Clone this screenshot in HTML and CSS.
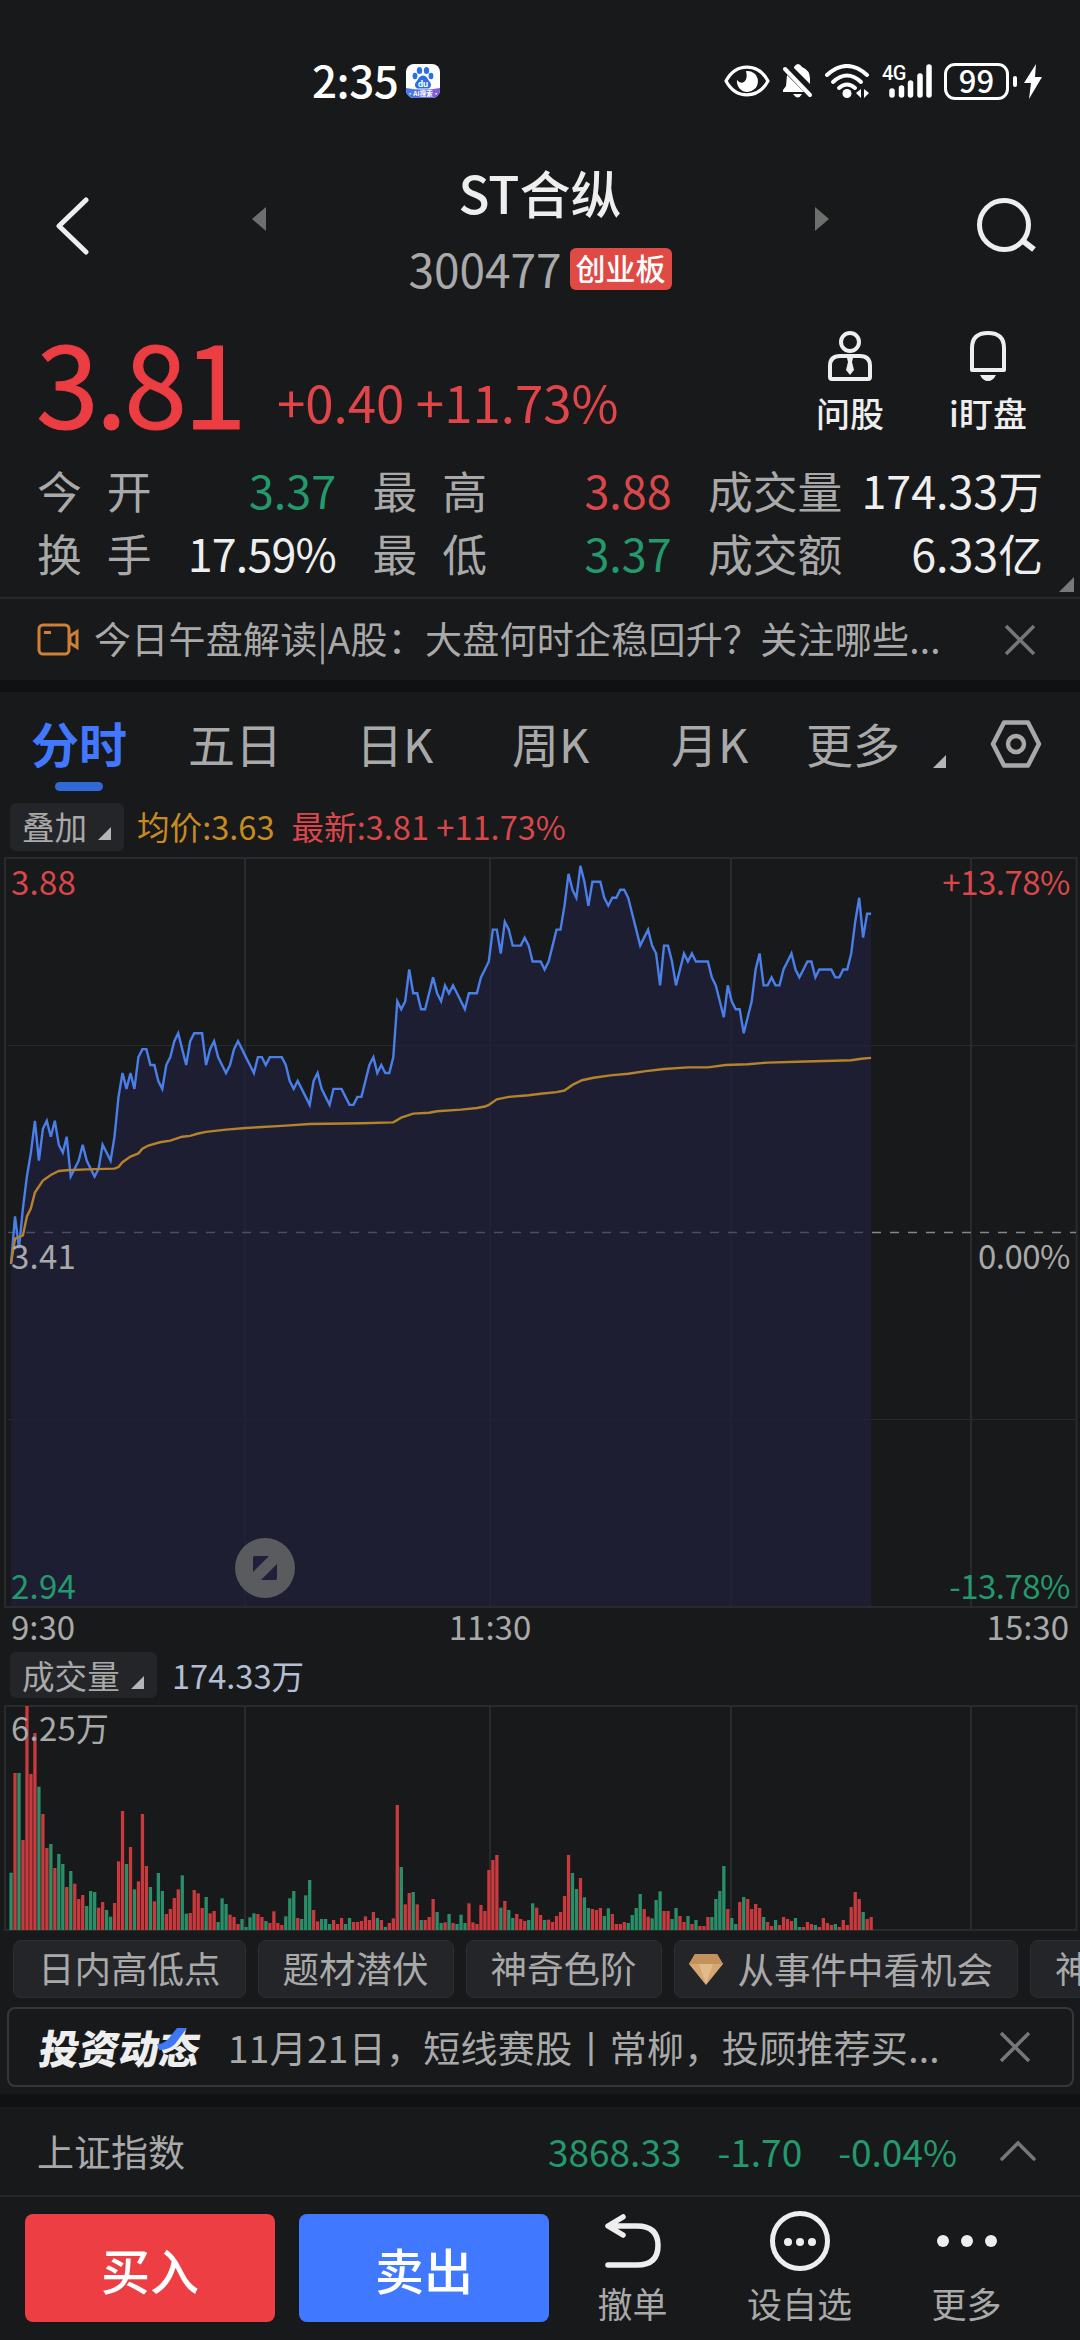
FILE: index.html
```html
<!DOCTYPE html>
<html lang="zh-CN">
<head>
  <meta charset="UTF-8" />
  <meta name="viewport" content="width=device-width, initial-scale=1.0" />
  <title>ST合纵 300477</title>
  <link rel="stylesheet" href="styles.css">
</head>
<body>
  <div class="statusbar">
    <span class="clock">2:35</span>
    <svg class="app-badge" width="34" height="34" viewBox="0 0 34 34">
      <defs>
        <linearGradient id="badge" x1="0" y1="0" x2="1" y2="0">
          <stop offset="0" stop-color="#3f7df0" /><stop offset="1" stop-color="#8458d8" />
        </linearGradient>
        <clipPath id="badgeClip"><rect width="34" height="34" rx="8" /></clipPath>
      </defs>
      <g clip-path="url(#badgeClip)">
        <rect width="34" height="34" fill="#fff" />
        <path d="M0 24Q17 27 34 24V34H0z" fill="url(#badge)" />
        <g fill="#2a6fe6">
          <ellipse cx="13.5" cy="6.5" rx="2.7" ry="3.6" /><ellipse cx="20.5" cy="6.5" rx="2.7" ry="3.6" />
          <ellipse cx="9" cy="12" rx="2.4" ry="3.3" /><ellipse cx="25" cy="12" rx="2.4" ry="3.3" />
          <path d="M17 11.5c4 0 4.5 4 7 6.5c2.5 3.5 0 7-3 6.5h-8c-3 .5-5.5-3-3-6.5c2.5-2.5 3-6.5 7-6.5z" />
        </g>
        <text x="17" y="22.5" class="badge-du">du</text>
        <text x="17" y="32" class="badge-ai">·AI搜索·</text>
      </g>
    </svg>
    <div class="status-icons">
      <svg width="46" height="32" viewBox="0 0 46 32">
        <path d="M2 16C12-2.5 34-2.5 44 16C34 34.5 12 34.5 2 16z" fill="none" stroke="#fff" stroke-width="3.2" stroke-linejoin="round" />
        <path d="M22 6a10.500 10.500 0 1 1-9 9q3 4 7 2q4-3 2-11z" fill="#fff" />
      </svg>
      <svg class="bell-off" width="32" height="34" viewBox="0 0 32 34" fill="#fff">
        <path d="M12 3q2-3 4-3t4 3q8 3 8 12v5L12 4z" />
        <path d="M5 11L22 28H1v-2l3-4z" />
        <path d="M3 5L28 31" stroke="#fff" stroke-width="4" stroke-linecap="round" />
        <path d="M11 30h9q-4 7-9 0z" />
      </svg>
      <svg class="wifi" width="45" height="34" viewBox="0 0 45 34">
        <g fill="none" stroke="#fff" stroke-width="4" stroke-linecap="round">
          <path d="M2 11Q22-7 42 11" /><path d="M8 18Q22 5 36 18" /><path d="M14 24Q22 17 30 24" />
        </g>
        <circle cx="22" cy="29.5" r="4.5" fill="#fff" />
        <path d="M36 25v9l-5-5zM39 25v9l5-5z" fill="#fff" />
      </svg>
      <svg class="signal" width="50" height="35" viewBox="0 0 50 35">
        <text x="0" y="16" class="net">4G</text>
        <g stroke="#fff" stroke-width="5.5" stroke-linecap="round">
          <path d="M10 27v4M19.5 24v7M28.5 19v12M38 12v19M47 3v28" />
        </g>
      </svg>
      <span class="battery">99</span>
      <span class="battery-cap"></span>
      <svg class="bolt" width="18" height="35" viewBox="0 0 18 35"><path d="M12 0L0 19h7L5 35L18 13h-7z" fill="#fff" /></svg>
    </div>
  </div>

  <header class="header">
    <svg class="back" width="36" height="60" viewBox="0 0 36 60"><path d="M32 5L5 31L32 57" fill="none" stroke="#eee" stroke-width="5" stroke-linecap="round" stroke-linejoin="round" /></svg>
    <svg class="prev" width="14" height="24" viewBox="0 0 14 24"><path d="M14 0v24L0 12z" fill="#6e6e6e" /></svg>
    <div class="stock">
      <h1>ST合纵</h1>
      <div class="code">300477<span class="board">创业板</span></div>
    </div>
    <svg class="next" width="14" height="24" viewBox="0 0 14 24"><path d="M0 0v24L14 12z" fill="#6e6e6e" /></svg>
    <svg class="search" width="62" height="58" viewBox="0 0 62 58"><g fill="none" stroke="#eee" stroke-width="5"><circle cx="28" cy="28" r="24.5" /><path d="M47 44L58 52.5" stroke-width="6" /></g></svg>
  </header>

  <section class="quote">
    <div class="price">3.81</div>
    <div class="change">+0.40 +11.73%</div>
    <div class="quick">
      <svg width="48" height="52" viewBox="0 0 48 52">
        <g fill="none" stroke="#eee" stroke-width="4"><circle cx="24" cy="12" r="9" /><path d="M4 47V36q0-10 10-10h20q10 0 10 10v11q0 2-2 2H6q-2 0-2-2z" /></g>
        <path d="M21 28h6l-1 4l2 8l-4 5l-4-5l2-8z" fill="#eee" />
      </svg>
      <span>问股</span>
    </div>
    <div class="quick">
      <svg width="48" height="52" viewBox="0 0 48 52">
        <path d="M8 40V18Q8 3 24 3T40 18V40z" fill="none" stroke="#eee" stroke-width="4" stroke-linejoin="round" />
        <path d="M16 45h16q-3 6-8 6t-8-6z" fill="#eee" />
      </svg>
      <span>i盯盘</span>
    </div>
  </section>

  <section class="stats">
    <div><span class="wide">今开</span><b class="down">3.37</b></div>
    <div><span class="wide">最高</span><b class="up">3.88</b></div>
    <div><span>成交量</span><b>174.33万</b></div>
    <div><span class="wide">换手</span><b class="tight">17.59%</b></div>
    <div><span class="wide">最低</span><b class="down">3.37</b></div>
    <div><span>成交额</span><b>6.33亿</b></div>
    <i class="corner"></i>
  </section>

  <div class="news">
    <svg width="44" height="34" viewBox="0 0 44 34"><g fill="none" stroke="#d07f36" stroke-width="3"><rect x="2" y="2" width="30" height="29" rx="4" /><path d="M33 13l7-4.5v16l-7-4.5zM7 9.5h7" /></g></svg>
    <span class="news-text">今日午盘解读|A股：大盘何时企稳回升？关注哪些...</span>
    <svg class="close" width="32" height="32" viewBox="0 0 32 32"><path d="M2 2L30 30M30 2L2 30" stroke="#777" stroke-width="3.5" /></svg>
  </div>

  <nav class="tabs">
    <a class="active">分时</a>
    <a>五日</a>
    <a>日K</a>
    <a>周K</a>
    <a>月K</a>
    <a class="more">更多<i class="tri"></i></a>
    <svg width="52" height="48" viewBox="0 0 52 48"><g fill="none" stroke="#a9a9a9" stroke-width="4.5"><path d="M14 2.5h24L49 24L38 45.5H14L3 24z" stroke-linejoin="round" /><circle cx="26" cy="24" r="8" /></g></svg>
  </nav>

  <div class="legend">
    <span class="picker">叠加<i class="tri"></i></span>
    <span class="avg">均价:3.63</span>
    <span class="last">最新:3.81 +11.73%</span>
  </div>

  <svg class="chart" id="priceChart" width="1080" height="752" viewBox="0 857 1080 752">
    <g class="grid">
      <path d="M245 858V1607M490 858V1607M731 858V1607M971 858V1607" />
      <path d="M8 1045.5H1076M8 1419.5H1076" stroke-width="1" />
      <rect x="5" y="858" width="1071.5" height="749" />
    </g>
    <path id="area" fill="#20203c" fill-opacity=".72" />
    <path d="M8 1232.5H872" stroke="#4b4c66" stroke-width="1.3" stroke-dasharray="9 9" />
    <path d="M872 1232.5H1076" stroke="#85878c" stroke-width="1.3" stroke-dasharray="9 9" />
    <path id="line" class="line" stroke="#4a7ee8" />
    <path id="average" class="line" stroke="#b6822c" />
    <text x="11" y="895" class="up">3.88</text>
    <text x="1070" y="895" class="up end">+13.78%</text>
    <text x="11" y="1269">3.41</text>
    <text x="1070" y="1269" class="end">0.00%</text>
    <text x="11" y="1599" class="down">2.94</text>
    <text x="1070" y="1599" class="down end">-13.78%</text>
    <circle cx="265" cy="1568" r="30" fill="#5a5b5e" />
    <path d="M254 1556h15l-16 16v-15zM277 1564v14q0 2-2 2h-14z" fill="#20203a" />
  </svg>
  <div class="times"><span>9:30</span><span>11:30</span><span>15:30</span></div>

  <div class="legend volume-legend">
    <span class="picker">成交量<i class="tri"></i></span>
    <span class="volume">174.33万</span>
  </div>
  <svg class="chart" width="1080" height="228" viewBox="0 1704 1080 228">
    <g class="grid">
      <path d="M245 1706V1930M490 1706V1930M731 1706V1930M971 1706V1930" />
      <rect x="5" y="1706" width="1071.5" height="224" />
    </g>
    <g id="bars"></g>
    <text x="11" y="1741">6.25万</text>
  </svg>

  <div class="chips">
    <span>日内高低点</span>
    <span>题材潜伏</span>
    <span>神奇色阶</span>
    <span class="gem">
      <svg width="34" height="31" viewBox="0 0 34 31"><path d="M6 0h22l6 10L17 31L0 10z" fill="#d6a774" /><path d="M6 0h22l6 10H0z" fill="#c2915c" /><path d="M10 10h14l-7 20z" fill="#e2bb8c" /></svg>从事件中看机会
    </span>
    <span>神奇</span>
  </div>

  <div class="feed">
    <span class="feed-logo"><em>投资动态</em><svg width="32" height="24" viewBox="0 0 32 24"><path d="M0 17Q7 17 12 11L20 1H30L18 17Q12 23 2 23z" fill="#3f78f5" /></svg></span>
    <span class="feed-text">11月21日，短线赛股丨常柳，投顾推荐买...</span>
    <svg class="close" width="32" height="32" viewBox="0 0 32 32"><path d="M2 2L30 30M30 2L2 30" stroke="#777" stroke-width="3.5" /></svg>
  </div>

  <div class="index-row">
    <span class="index-name">上证指数</span>
    <span>3868.33</span>
    <span>-1.70</span>
    <span>-0.04%</span>
    <svg width="36" height="22" viewBox="0 0 36 22"><path d="M2 19L18 3L34 19" fill="none" stroke="#777" stroke-width="3.5" stroke-linecap="round" /></svg>
  </div>

  <footer class="actions">
    <button class="buy">买入</button>
    <button class="sell">卖出</button>
    <div class="action">
      <svg width="60" height="60" viewBox="0 0 60 60"><path d="M20 6L5 15L20 24M6 15H34Q55 15 55 34.5T34 54H5" fill="none" stroke="#eee" stroke-width="5.5" stroke-linecap="round" stroke-linejoin="round" /></svg>
      撤单
    </div>
    <div class="action">
      <svg width="60" height="60" viewBox="0 0 60 60"><circle cx="30" cy="30" r="27.5" fill="none" stroke="#eee" stroke-width="5" /><g fill="#eee"><circle cx="18" cy="31" r="4" /><circle cx="30" cy="31" r="4" /><circle cx="42" cy="31" r="4" /></g></svg>
      设自选
    </div>
    <div class="action">
      <svg width="60" height="60" viewBox="0 0 60 60" fill="#eee"><circle cx="6" cy="30" r="6" /><circle cx="30" cy="30" r="6" /><circle cx="54" cy="30" r="6" /></svg>
      更多
    </div>
  </footer>

  <script src="chart.js"></script>
</body>
</html>
```
FILE: styles.css
```css
* {
  margin: 0;
  padding: 0;
  box-sizing: border-box;
}
body {
  width: 1080px;
  height: 2340px;
  overflow: hidden;
  background: #17191a;
  color: #eeeeee;
  font-family: "Noto Sans CJK SC", "Noto Sans", sans-serif;
  font-size: 37px;
  line-height: 1;
}
svg {
  display: block;
  flex-shrink: 0;
}
.up { color: #d9474a; fill: #d9474a; }
.down { color: #24996d; fill: #24996d; }

/* Status bar */
.statusbar {
  height: 162px;
  padding-left: 312px;
  display: flex;
  align-items: center;
  color: #fff;
}
.clock {
  width: 94px;
  padding-bottom: 5px;
  font-size: 44px;
  font-weight: 500;
  letter-spacing: -0.5px;
}
.badge-du { font: bold 9px "Roboto", sans-serif; fill: #fff; text-anchor: middle; }
.badge-ai { font-size: 6.5px; font-weight: bold; fill: #fff; text-anchor: middle; }
.net { font: 500 20px "Roboto", sans-serif; fill: #fff; letter-spacing: -0.5px; }
.status-icons {
  margin-left: 284px;
  display: flex;
  align-items: center;
}
.bell-off { margin-left: 12px; }
.wifi { margin-left: 11px; }
.signal { margin-left: 12px; overflow: visible; }
.battery {
  width: 65px;
  height: 37px;
  margin-left: 12px;
  border: 3px solid #fff;
  border-radius: 11px;
  font-size: 31px;
  font-weight: 500;
  line-height: 28px;
  text-align: center;
}
.battery-cap {
  width: 4px;
  height: 11px;
  margin-left: 4px;
  border-radius: 2px;
  background: #fff;
}
.bolt { margin-left: 7px; }

/* Header */
.header {
  height: 146px;
  padding-left: 54px;
  display: flex;
}
.back { margin-top: 33px; }
.prev { margin: 45px 0 0 162px; }
.next { margin: 45px 0 0 125px; }
.search { margin: 35px 0 0 147px; }
.stock {
  width: 300px;
  margin-left: 124px;
  text-align: center;
}
.stock h1 {
  margin-top: 5px;
  font-size: 51px;
  font-weight: 500;
  line-height: 51px;
}
.code {
  margin-top: 27px;
  height: 46px;
  display: flex;
  justify-content: center;
  align-items: center;
  color: #a9a9a9;
  font-size: 46px;
  line-height: 42px;
}
.board {
  width: 102px;
  height: 42px;
  margin: 1px 0 0 8px;
  border-radius: 6px;
  background: #e04a45;
  color: #fff;
  font-size: 30px;
  font-weight: 500;
  line-height: 39px;
}

/* Price */
.quote {
  height: 151px;
  padding: 22px 0 0 36px;
  display: flex;
}
.price {
  width: 241px;
  margin-top: -6px;
  color: #ec3d43;
  font-size: 113px;
  line-height: 113px;
  letter-spacing: -3px;
  -webkit-text-stroke: 1px #ec3d43;
}
.change {
  width: 504px;
  padding-top: 46px;
  color: #e0454a;
  font-size: 51px;
  line-height: 51px;
}
.quick {
  width: 138px;
  display: flex;
  flex-direction: column;
  align-items: center;
  gap: 14px;
  font-size: 34px;
  font-weight: 500;
}
.stats {
  position: relative;
  height: 140px;
  padding: 0 37px;
  display: grid;
  grid-template-columns: 299px 299px 335px;
  grid-template-rows: 63px 63px;
  column-gap: 36.5px;
  font-size: 44.8px;
  border-bottom: 2px solid #26282a;
}
.stats div {
  display: flex;
  justify-content: space-between;
  align-items: center;
}
.stats span { color: #a9a9a9; }
.stats .wide { letter-spacing: 25px; }
.stats b { font-weight: 400; }
.stats .tight { letter-spacing: -0.8px; }
.corner {
  position: absolute;
  right: 6px;
  bottom: 5px;
  border-left: 15px solid transparent;
  border-bottom: 15px solid #77797b;
}

/* News line */
.news {
  height: 93px;
  padding: 0 44px 0 37px;
  display: flex;
  align-items: center;
  border-bottom: 12px solid #101113;
  color: #a9a9a9;
}
.news-text {
  margin-left: 13px;
  padding-bottom: 2px;
  flex: 1;
  letter-spacing: 0.25px;
  white-space: nowrap;
}

/* Tabs */
.tabs {
  height: 104px;
  padding-left: 31px;
  display: flex;
  align-items: center;
  color: #a9a9a9;
  font-size: 47px;
}
.tabs a {
  height: 104px;
  line-height: 101px;
  white-space: nowrap;
}
.tabs a:nth-child(1) { width: 157px; }
.tabs a:nth-child(2) { width: 168px; }
.tabs a:nth-child(3) { width: 156px; }
.tabs a:nth-child(4) { width: 159px; }
.tabs a:nth-child(5) { width: 135px; }
.tabs .more { width: 184px; }
.tabs .more .tri { margin-left: 33px; margin-bottom: -5px; }
.tabs .active {
  position: relative;
  color: #4178ff;
  font-size: 48px;
  font-weight: 700;
}
.active::after {
  content: "";
  position: absolute;
  left: 24px;
  bottom: 5px;
  width: 48px;
  height: 9px;
  border-radius: 4.5px;
  background: #3068d6;
}
.tri {
  display: inline-block;
  border-left: 13px solid transparent;
  border-bottom: 13px solid #b5b5b5;
}

/* Charts */
.legend {
  height: 61px;
  padding: 7px 0 6px 10px;
  display: flex;
  font-size: 32.6px;
  line-height: 45px;
  white-space: nowrap;
}
.picker {
  width: 114px;
  padding-left: 12px;
  border-radius: 6px;
  background: #242528;
  color: #a9a9a9;
}
.picker .tri { margin-left: 11px; }
.avg { margin-left: 13px; color: #c88b20; }
.last { margin-left: 17px; color: #d9474a; }
.chart text {
  font-size: 33px;
  letter-spacing: 0.2px;
  fill: #a9a9a9;
}
.chart .up { fill: #d9474a; }
.chart .down { fill: #24996d; }
.chart .end { text-anchor: end; letter-spacing: -0.5px; }
.grid {
  fill: none;
  stroke: #292a2c;
  stroke-width: 2;
}
.line {
  fill: none;
  stroke-width: 2.4;
  stroke-linejoin: miter;
}
.times {
  height: 36px;
  padding: 0 11px;
  display: grid;
  grid-template-columns: 379px 200px 479px;
  color: #a9a9a9;
  font-size: 33px;
  line-height: 35px;
}
.times span:nth-child(2) { text-align: center; }
.times span:nth-child(3) { text-align: right; }
.volume-legend { height: 59px; line-height: 46px; }
.volume-legend .picker { width: 147px; }
.volume { margin-left: 15px; color: #b4bed4; }
.bar-up { fill: #c93a3e; }
.bar-down { fill: #2a8f69; }

/* Indicator chips */
.chips {
  height: 75px;
  padding: 8px 0 9px 13px;
  display: flex;
  gap: 12px;
  font-size: 36.5px;
  white-space: nowrap;
  overflow: hidden;
}
.chips span {
  flex-shrink: 0;
  height: 58px;
  padding: 0 24px;
  border: 1px solid #2d2e31;
  border-radius: 8px;
  background: #242528;
  color: #a9a9a9;
  line-height: 54px;
}
.chips .gem {
  padding: 0 24px 0 14px;
  display: flex;
  align-items: center;
  gap: 15px;
}

/* Feed card */
.feed {
  height: 80px;
  margin: 0 6px 0 7px;
  padding: 0 41px 0 31px;
  display: flex;
  align-items: center;
  border: 2px solid #343638;
  border-radius: 8px;
  color: #a9a9a9;
}
.feed-logo {
  position: relative;
  width: 188px;
}
.feed-logo em {
  display: block;
  color: #eeeeee;
  font-size: 40px;
  font-style: normal;
  font-weight: 900;
  transform: skewX(-9deg);
}
.feed-logo svg {
  position: absolute;
  left: 117px;
  top: 0;
}
.feed-text { flex: 1; letter-spacing: 0.3px; white-space: nowrap; }

/* Index */
.index-row {
  height: 103px;
  margin-top: 7px;
  padding: 0 44px 0 37px;
  display: flex;
  align-items: center;
  border-top: 13px solid #101113;
  border-bottom: 2px solid #242628;
  color: #24996d;
}
.index-row span { margin-right: 36px; }
.index-row .index-name { flex: 1; margin-right: 0; color: #a9a9a9; }
.index-row svg { margin-left: 7px; }

/* Bottom actions */
.actions {
  padding: 14px 0 0 25px;
  display: flex;
}
.actions button {
  width: 250px;
  height: 108px;
  margin: 3px 24px 0 0;
  border: 0;
  border-radius: 8px;
  background: #ed3e44;
  color: #fff;
  font-family: inherit;
  font-size: 49px;
  font-weight: 500;
}
.actions .sell { background: #4079ff; margin-right: 0; }
.action {
  width: 167px;
  display: flex;
  flex-direction: column;
  align-items: center;
  gap: 14px;
  color: #a9a9a9;
  font-size: 35px;
}
```
FILE: chart.js
```js
// One value per minute from 9:30, prices in cents
const prices = [
  337,343,339,344,348,351,355,350,354,355,353,355,352,351,353,348,349,350,352,350,
  349,348,349,352,351,350,353,358,361,359,361,359,363,364,364,362,362,360,359,362,
  363,365,366,364,362,365,366,366,366,362,364,365,363,362,361,362,364,365,364,363,
  362,361,363,363,362,363,363,363,363,362,360,359,360,359,358,357,360,361,359,358,
  357,359,359,359,358,357,357,358,358,360,362,363,361,362,361,361,363,370,369,370,
  374,371,371,369,369,371,373,371,370,372,371,372,371,370,369,371,371,371,373,374,
  375,379,379,376,380,379,377,377,377,378,377,375,375,375,374,375,377,379,379,382,
  386,384,383,387,385,382,385,385,385,383,382,383,383,384,384,383,381,379,377,378,
  379,377,376,372,377,377,375,372,374,376,375,376,375,375,375,375,373,372,370,368,
  372,370,369,369,366,368,370,374,376,372,372,373,372,372,374,375,376,374,373,374,
  375,375,373,374,374,374,374,373,373,374,374,376,380,383,378,381,381
];

// Average price, [minute, cents]
const average = [
  [0,337.1],[1,340.2],[3,340.6],[4,343],[5,344],[6,346],[8,347.5],[10,348.2],[12,348.7],[14,348.8],
  [19,348.9],[26,349],[27,349.2],[28,349.8],[30,350.5],[32,350.9],[33,351.5],[34.5,351.9],[37.4,352.3],[40,352.5],
  [43,353],[45,353.1],[47,353.4],[49,353.6],[54,353.9],[59,354.1],[69,354.4],[75,354.6],[88,354.7],[96,354.8],
  [98,355.4],[101,355.9],[105,356],[107,356.2],[113,356.4],[117,356.6],[119,356.8],[120,357],[122,357.7],[125,358],
  [130,358.2],[133,358.4],[137,358.6],[139,358.8],[141,359.5],[143.4,360.1],[146.3,360.4],[150.5,360.7],[155,360.9],[159,361.2],
  [164,361.5],[170,361.7],[175,361.7],[179.5,362],[185,362.1],[190,362.3],[197.5,362.4],[211,362.6],[213.5,362.8],[216,362.9]
];

// Volume per minute, r = up, g = down
const volumes = `g172 r471 g471 r270 r672 r468 r591 g430 r348 r246 g258 r186 g228 g198 r129 g177 r139 r93 r105 g72
  g117 g114 r67 r84 g60 g40 r81 r206 r357 g198 r249 g122 r146 r348 r192 g129 r86 g171 g117 r48
  r63 r96 r122 g164 g49 r51 r120 r110 r66 g99 r50 r57 g24 g95 g78 r46 r39 r18 g33 g9
  g38 g50 r48 r39 g27 r21 r56 r21 r15 g41 g95 g117 r36 g33 g104 g150 r60 r26 g33 g33
  g18 r30 r18 r36 g18 g36 r24 r24 r27 r41 r30 r54 g36 r30 g9 r21 r35 r375 g189 r77
  r111 g114 r77 g30 r30 r39 r93 g54 g21 r23 g48 r21 g18 g46 g21 r80 r23 r18 r75 r57
  r180 r210 r225 g67 r87 g60 g36 r48 r33 r27 g30 g80 r67 r45 g30 r31 r24 r42 r54 r102
  r225 g171 g123 r156 g98 g66 r63 r60 r66 g42 g65 r48 r18 r18 r24 g21 g45 g66 g108 r63
  r40 g35 g90 g116 r57 r57 g33 g66 r42 r24 g42 r18 g30 r12 r12 r39 g39 g93 g117 g192
  r63 g36 g18 r84 g99 r93 r63 r78 r66 g39 r24 r12 g30 r15 r39 r33 r27 g36 g9 r9
  r24 r18 g15 r9 r36 r21 r15 g18 r9 r30 r15 r69 r114 r93 g54 r33 r39`.split(/\s+/);

const step = 3.982;
const x = i => (11 + i * step).toFixed(1);
const y = p => (1232.3 - (p - 341) * 7.965).toFixed(1);

const line = prices.map((p, i) => x(i) + "," + y(p)).join("L");
document.getElementById("line").setAttribute("d", "M" + line);
document.getElementById("area").setAttribute("d", "M" + line + "V1606H11z");
document.getElementById("average").setAttribute("d", "M" + average.map(([i, p]) => x(i) + "," + y(p)).join("L"));

const bars = document.getElementById("bars");
volumes.forEach((v, i) => {
  const h = v.slice(1) / 3;
  const bar = document.createElementNS("http://www.w3.org/2000/svg", "rect");
  bar.setAttribute("class", v[0] === "r" ? "bar-up" : "bar-down");
  bar.setAttribute("x", (9.4 + i * step).toFixed(2));
  bar.setAttribute("y", 1930 - h);
  bar.setAttribute("width", 3.3);
  bar.setAttribute("height", h);
  bars.appendChild(bar);
});
```
